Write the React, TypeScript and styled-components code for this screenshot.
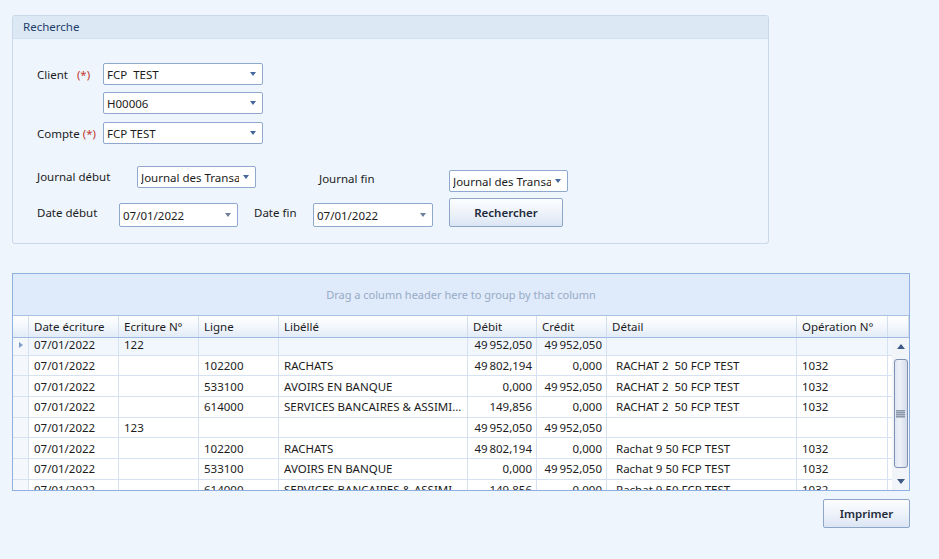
import styled, { createGlobalStyle } from 'styled-components'

const GlobalStyle = createGlobalStyle`
  body {
    margin: 0;
    background: #eef5fd;
    font-family: "Noto Sans", "Open Sans", sans-serif;
    font-size: 11.5px;
    color: #1c1c1c;
  }
`

const Page = styled.div`
  width: 939px;
  height: 559px;
  padding: 15px 0 0 12px;
  box-sizing: border-box;
`

const GroupBox = styled.div`
  width: 757px;
  height: 229px;
  box-sizing: border-box;
  border: 1px solid #c8d7ea;
  border-radius: 3px;
  background: #eef5fd;
`

const GroupTitle = styled.div`
  height: 22px;
  line-height: 22px;
  background: #dde8f5;
  border-bottom: 1px solid #d2dfef;
  padding-left: 10px;
  color: #223e6a;
`

const GroupBody = styled.div`
  padding: 24px 0 0 24px;
`

const FieldRow = styled.div<{ $top: number; $h?: number; $align?: string }>`
  display: flex;
  align-items: ${(p) => p.$align || 'center'};
  margin-top: ${(p) => p.$top}px;
  height: ${(p) => (p.$h ? `${p.$h}px` : 'auto')};
`

const Label = styled.div<{ $w: number; $ml?: number; $pt?: number }>`
  width: ${(p) => p.$w}px;
  margin-left: ${(p) => p.$ml || 0}px;
  padding-top: ${(p) => p.$pt || 0}px;
  box-sizing: border-box;
  white-space: nowrap;
`

const Req = styled.span`
  color: #c0392b;
`

const Combo = styled.div<{ $w: number; $h?: number; $ml?: number; $mt?: number }>`
  width: ${(p) => p.$w}px;
  height: ${(p) => p.$h || 22}px;
  margin-left: ${(p) => p.$ml || 0}px;
  margin-top: ${(p) => p.$mt || 0}px;
  box-sizing: border-box;
  border: 1px solid #8ea8cf;
  border-radius: 2px;
  background: #fff;
  display: flex;
  align-items: center;
  padding-left: 3px;
  overflow: hidden;
`

const ComboText = styled.div`
  flex: 1;
  white-space: pre;
  overflow: hidden;
`

const Arrow = styled.div<{ $c?: string }>`
  width: 0;
  height: 0;
  margin: 0 6px 0 4px;
  border-left: 3.5px solid transparent;
  border-right: 3.5px solid transparent;
  border-top: 4px solid ${(p) => p.$c || '#45679a'};
`

const Button = styled.button<{ $w: number; $h: number; $ml?: number }>`
  width: ${(p) => p.$w}px;
  height: ${(p) => p.$h}px;
  margin-left: ${(p) => p.$ml || 0}px;
  box-sizing: border-box;
  border: 1px solid #8da6c8;
  border-radius: 2px;
  background: linear-gradient(#fcfdff 0%, #eef3fa 50%, #dbe5f3 100%);
  font-family: inherit;
  font-size: 11.5px;
  font-weight: 600;
  color: #1e2a3a;
  padding: 0;
`

const Grid = styled.div`
  margin-top: 29px;
  width: 898px;
  height: 218px;
  box-sizing: border-box;
  border: 1px solid #8db0de;
  background: #fff;
  display: flex;
  flex-direction: column;
  overflow: hidden;
`

const GroupPanel = styled.div`
  height: 41px;
  flex: none;
  background: #dfeafa;
  border-bottom: 1px solid #a8c2e6;
  display: flex;
  align-items: center;
  justify-content: center;
  color: #97aac6;
  font-size: 11px;
`

const cols = '16px 90px 80px 80px 189px 69px 70px 190px 91px 1fr'

const HeaderRow = styled.div`
  display: grid;
  grid-template-columns: ${cols};
  height: 21px;
  flex: none;
  background: linear-gradient(#ffffff 0%, #f3f7fc 50%, #e2ebf7 100%);
  border-bottom: 1px solid #9fbbe2;
`

const HeadCell = styled.div`
  display: flex;
  align-items: center;
  padding-left: 5px;
  border-right: 1px solid #d3deed;
  white-space: nowrap;
  overflow: hidden;
`

const Body = styled.div`
  flex: 1;
  display: flex;
  overflow: hidden;
`

const RowList = styled.div`
  flex: 1;
  overflow: hidden;
`

const Rows = styled.div`
  margin-top: -3px;
`

const DataRow = styled.div<{ $focus?: boolean }>`
  display: grid;
  grid-template-columns: ${cols};
  height: 20.7px;
  background: ${(p) => (p.$focus ? '#f2f7fd' : '#fff')};
`

const Cell = styled.div<{ $right?: boolean; $pl?: number }>`
  display: flex;
  align-items: center;
  justify-content: ${(p) => (p.$right ? 'flex-end' : 'flex-start')};
  padding: 0 4px 0 ${(p) => (p.$pl !== undefined ? p.$pl : 5)}px;
  border-right: 1px solid #d6e2f1;
  border-bottom: 1px solid #d6e2f1;
  white-space: pre;
  overflow: hidden;
`

const Indicator = styled.div`
  display: flex;
  align-items: center;
  justify-content: center;
  border-right: 1px solid #d6e2f1;
  border-bottom: 1px solid #d6e2f1;
  background: #f4f7fb;
`

const RowArrow = styled.div`
  width: 0;
  height: 0;
  border-top: 3.5px solid transparent;
  border-bottom: 3.5px solid transparent;
  border-left: 4px solid #7f9ccb;
`

const ScrollBar = styled.div`
  width: 17px;
  flex: none;
  background: #f1f5fa;
  display: flex;
  flex-direction: column;
  align-items: center;
`

const ScrollArrow = styled.div<{ $up?: boolean }>`
  height: 17px;
  flex: none;
  display: flex;
  align-items: center;
  justify-content: center;
  &::after {
    content: '';
    width: 0;
    height: 0;
    border-left: 4.5px solid transparent;
    border-right: 4.5px solid transparent;
    ${(p) => (p.$up ? 'border-bottom: 5px solid #3f5a86;' : 'border-top: 5px solid #3f5a86;')}
  }
`

const Thumb = styled.div`
  width: 14px;
  height: 109px;
  margin-top: 4px;
  box-sizing: border-box;
  border: 1px solid #7c91b3;
  border-radius: 3px;
  background: linear-gradient(90deg, #dfe6f1 0%, #eef2f8 40%, #d3dceb 100%);
  display: flex;
  align-items: center;
  justify-content: center;
`

const Grip = styled.div`
  width: 9px;
  height: 8px;
  background: repeating-linear-gradient(#8c98aa 0 1px, #b4bdcb 1px 2px);
`

const Spacer = styled.div`
  flex: 1;
`

const Footer = styled.div`
  width: 898px;
  display: flex;
  justify-content: flex-end;
  margin-top: 8px;
`

type Row = {
  date: string
  num: string
  ligne: string
  libelle: string
  debit: string
  credit: string
  detail: string
  op: string
}

const n = (s: string) => s.replace(' ', '\u2009')

const rows: Row[] = [
  { date: '07/01/2022', num: '122', ligne: '', libelle: '', debit: n('49 952,050'), credit: n('49 952,050'), detail: '', op: '' },
  { date: '07/01/2022', num: '', ligne: '102200', libelle: 'RACHATS', debit: n('49 802,194'), credit: '0,000', detail: 'RACHAT 2  50 FCP TEST', op: '1032' },
  { date: '07/01/2022', num: '', ligne: '533100', libelle: 'AVOIRS EN BANQUE', debit: '0,000', credit: n('49 952,050'), detail: 'RACHAT 2  50 FCP TEST', op: '1032' },
  { date: '07/01/2022', num: '', ligne: '614000', libelle: 'SERVICES BANCAIRES & ASSIMI...', debit: '149,856', credit: '0,000', detail: 'RACHAT 2  50 FCP TEST', op: '1032' },
  { date: '07/01/2022', num: '123', ligne: '', libelle: '', debit: n('49 952,050'), credit: n('49 952,050'), detail: '', op: '' },
  { date: '07/01/2022', num: '', ligne: '102200', libelle: 'RACHATS', debit: n('49 802,194'), credit: '0,000', detail: 'Rachat 9 50 FCP TEST', op: '1032' },
  { date: '07/01/2022', num: '', ligne: '533100', libelle: 'AVOIRS EN BANQUE', debit: '0,000', credit: n('49 952,050'), detail: 'Rachat 9 50 FCP TEST', op: '1032' },
  { date: '07/01/2022', num: '', ligne: '614000', libelle: 'SERVICES BANCAIRES & ASSIMI...', debit: '149,856', credit: '0,000', detail: 'Rachat 9 50 FCP TEST', op: '1032' },
]

const headers = ['Date écriture', 'Ecriture N°', 'Ligne', 'Libéllé', 'Débit', 'Crédit', 'Détail', 'Opération N°', '']

function App() {
  return (
    <>
      <GlobalStyle />
      <Page>
        <GroupBox>
          <GroupTitle>Recherche</GroupTitle>
          <GroupBody>
            <FieldRow $top={0}>
              <Label $w={66}>
                Client&nbsp;&nbsp;&nbsp;<Req>(*)</Req>
              </Label>
              <Combo $w={160}>
                <ComboText>FCP  TEST</ComboText>
                <Arrow />
              </Combo>
            </FieldRow>
            <FieldRow $top={7}>
              <Label $w={66} />
              <Combo $w={160}>
                <ComboText>H00006</ComboText>
                <Arrow />
              </Combo>
            </FieldRow>
            <FieldRow $top={8}>
              <Label $w={66}>
                Compte <Req>(*)</Req>
              </Label>
              <Combo $w={160}>
                <ComboText>FCP TEST</ComboText>
                <Arrow />
              </Combo>
            </FieldRow>
            <FieldRow $top={22} $h={26} $align="flex-start">
              <Label $w={100} $pt={3}>Journal début</Label>
              <Combo $w={119}>
                <ComboText>Journal des Transactions</ComboText>
                <Arrow />
              </Combo>
              <Label $w={130} $ml={63} $pt={5}>Journal fin</Label>
              <Combo $w={119} $mt={4}>
                <ComboText>Journal des Transactions</ComboText>
                <Arrow />
              </Combo>
            </FieldRow>
            <FieldRow $top={6} $h={29} $align="flex-start">
              <Label $w={82} $pt={7}>Date début</Label>
              <Combo $w={119} $h={24} $mt={5}>
                <ComboText>07/01/2022</ComboText>
                <Arrow $c="#6d7f99" />
              </Combo>
              <Label $w={59} $ml={16} $pt={7}>Date fin</Label>
              <Combo $w={120} $h={24} $mt={5}>
                <ComboText>07/01/2022</ComboText>
                <Arrow $c="#6d7f99" />
              </Combo>
              <Button $w={114} $h={29} $ml={16}>Rechercher</Button>
            </FieldRow>
          </GroupBody>
        </GroupBox>

        <Grid>
          <GroupPanel>Drag a column header here to group by that column</GroupPanel>
          <HeaderRow>
            <HeadCell />
            {headers.map((h, i) => (
              <HeadCell key={i}>{h}</HeadCell>
            ))}
          </HeaderRow>
          <Body>
            <RowList>
              <Rows>
                {rows.map((r, i) => (
                  <DataRow key={i} $focus={i === 0}>
                    <Indicator>{i === 0 && <RowArrow />}</Indicator>
                    <Cell>{r.date}</Cell>
                    <Cell>{r.num}</Cell>
                    <Cell>{r.ligne}</Cell>
                    <Cell>{r.libelle}</Cell>
                    <Cell $right>{r.debit}</Cell>
                    <Cell $right>{r.credit}</Cell>
                    <Cell $pl={9}>{r.detail}</Cell>
                    <Cell>{r.op}</Cell>
                    <Cell />
                  </DataRow>
                ))}
              </Rows>
            </RowList>
            <ScrollBar>
              <ScrollArrow $up />
              <Thumb>
                <Grip />
              </Thumb>
              <Spacer />
              <ScrollArrow />
            </ScrollBar>
          </Body>
        </Grid>
        <Footer>
          <Button $w={87} $h={29}>Imprimer</Button>
        </Footer>
      </Page>
    </>
  )
}

export default App
